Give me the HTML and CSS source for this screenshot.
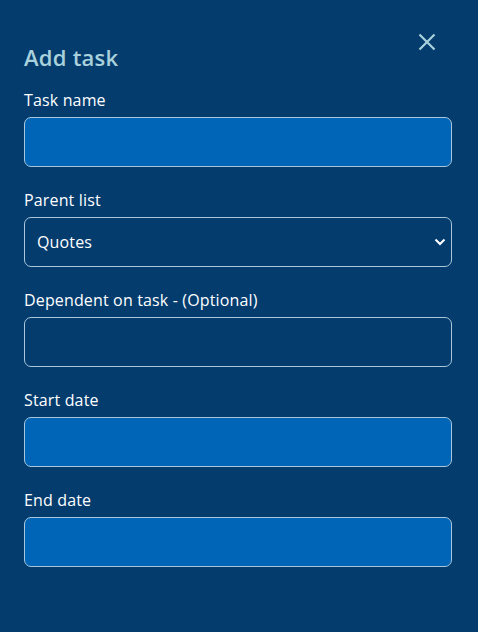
FILE: index.html
```html
<!DOCTYPE html>
<html lang="en">
<head>
<meta charset="utf-8">
<title>Add task</title>
<link rel="stylesheet" href="styles.css">
</head>
<body>
<div class="panel">
  <div class="header">
    <h2 class="title">Add task</h2>
    <button class="close" type="button" aria-label="Close">
      <svg width="18" height="18" viewBox="0 0 18 18"><path d="M1.5 1.5 L16.5 16.5 M16.5 1.5 L1.5 16.5" stroke="#a9d1dc" stroke-width="2.2" stroke-linecap="butt" fill="none"/></svg>
    </button>
  </div>
  <form class="form">
    <div class="group">
      <label class="label" for="name">Task name</label>
      <input class="field filled" id="name" type="text">
    </div>
    <div class="group">
      <label class="label" for="parent">Parent list</label>
      <div class="select-wrap">
        <select class="field select" id="parent"><option>Quotes</option></select>
        <svg class="chev" width="12" height="8" viewBox="0 0 12 8"><path d="M1.5 1.5 L6 6 L10.5 1.5" stroke="#fff" stroke-width="2" fill="none"/></svg>
      </div>
    </div>
    <div class="group">
      <label class="label" for="dep">Dependent on task - (Optional)</label>
      <input class="field" id="dep" type="text">
    </div>
    <div class="group">
      <label class="label" for="start">Start date</label>
      <input class="field filled" id="start" type="text">
    </div>
    <div class="group">
      <label class="label" for="end">End date</label>
      <input class="field filled" id="end" type="text">
    </div>
  </form>
</div>
</body>
</html>
```

FILE: styles.css
```css
html, body {
  margin: 0;
  padding: 0;
  background: #043c6e;
  height: 100%;
}
body {
  font-family: "Open Sans", "Noto Sans", sans-serif;
  color: #ffffff;
}
.panel {
  padding: 26px 26px 0 24px;
}
.header {
  display: flex;
  justify-content: space-between;
  align-items: flex-start;
  margin-bottom: 16px;
}
.title {
  margin: 16px 0 0 0;
  font-size: 22px;
  line-height: 30px;
  font-weight: 600;
  letter-spacing: 0.25px;
  color: #a9d1dc;
}
.close {
  width: 32px;
  height: 32px;
  margin-right: 9px;
  padding: 0;
  border: 0;
  background: transparent;
  display: flex;
  align-items: center;
  justify-content: center;
  cursor: pointer;
}
.form {
  display: flex;
  flex-direction: column;
  gap: 21px;
}
.group {
  display: flex;
  flex-direction: column;
}
.label {
  font-size: 16px;
  line-height: 22px;
  letter-spacing: 0.15px;
  padding-top: 1px;
  margin-bottom: 6px;
}
.field {
  box-sizing: border-box;
  width: 100%;
  height: 50px;
  margin: 0;
  border: 1px solid #a9c6da;
  border-radius: 7px;
  background: transparent;
  color: #fff;
  font-family: inherit;
  font-size: 16px;
  letter-spacing: 0.15px;
  padding: 0 12px;
  outline: none;
}
.field.filled {
  background: #0064b7;
}
.select-wrap {
  position: relative;
}
.select {
  appearance: none;
  -webkit-appearance: none;
  display: block;
}
.select option {
  color: #000;
}
.chev {
  position: absolute;
  right: 6px;
  top: 21px;
  pointer-events: none;
}
```
